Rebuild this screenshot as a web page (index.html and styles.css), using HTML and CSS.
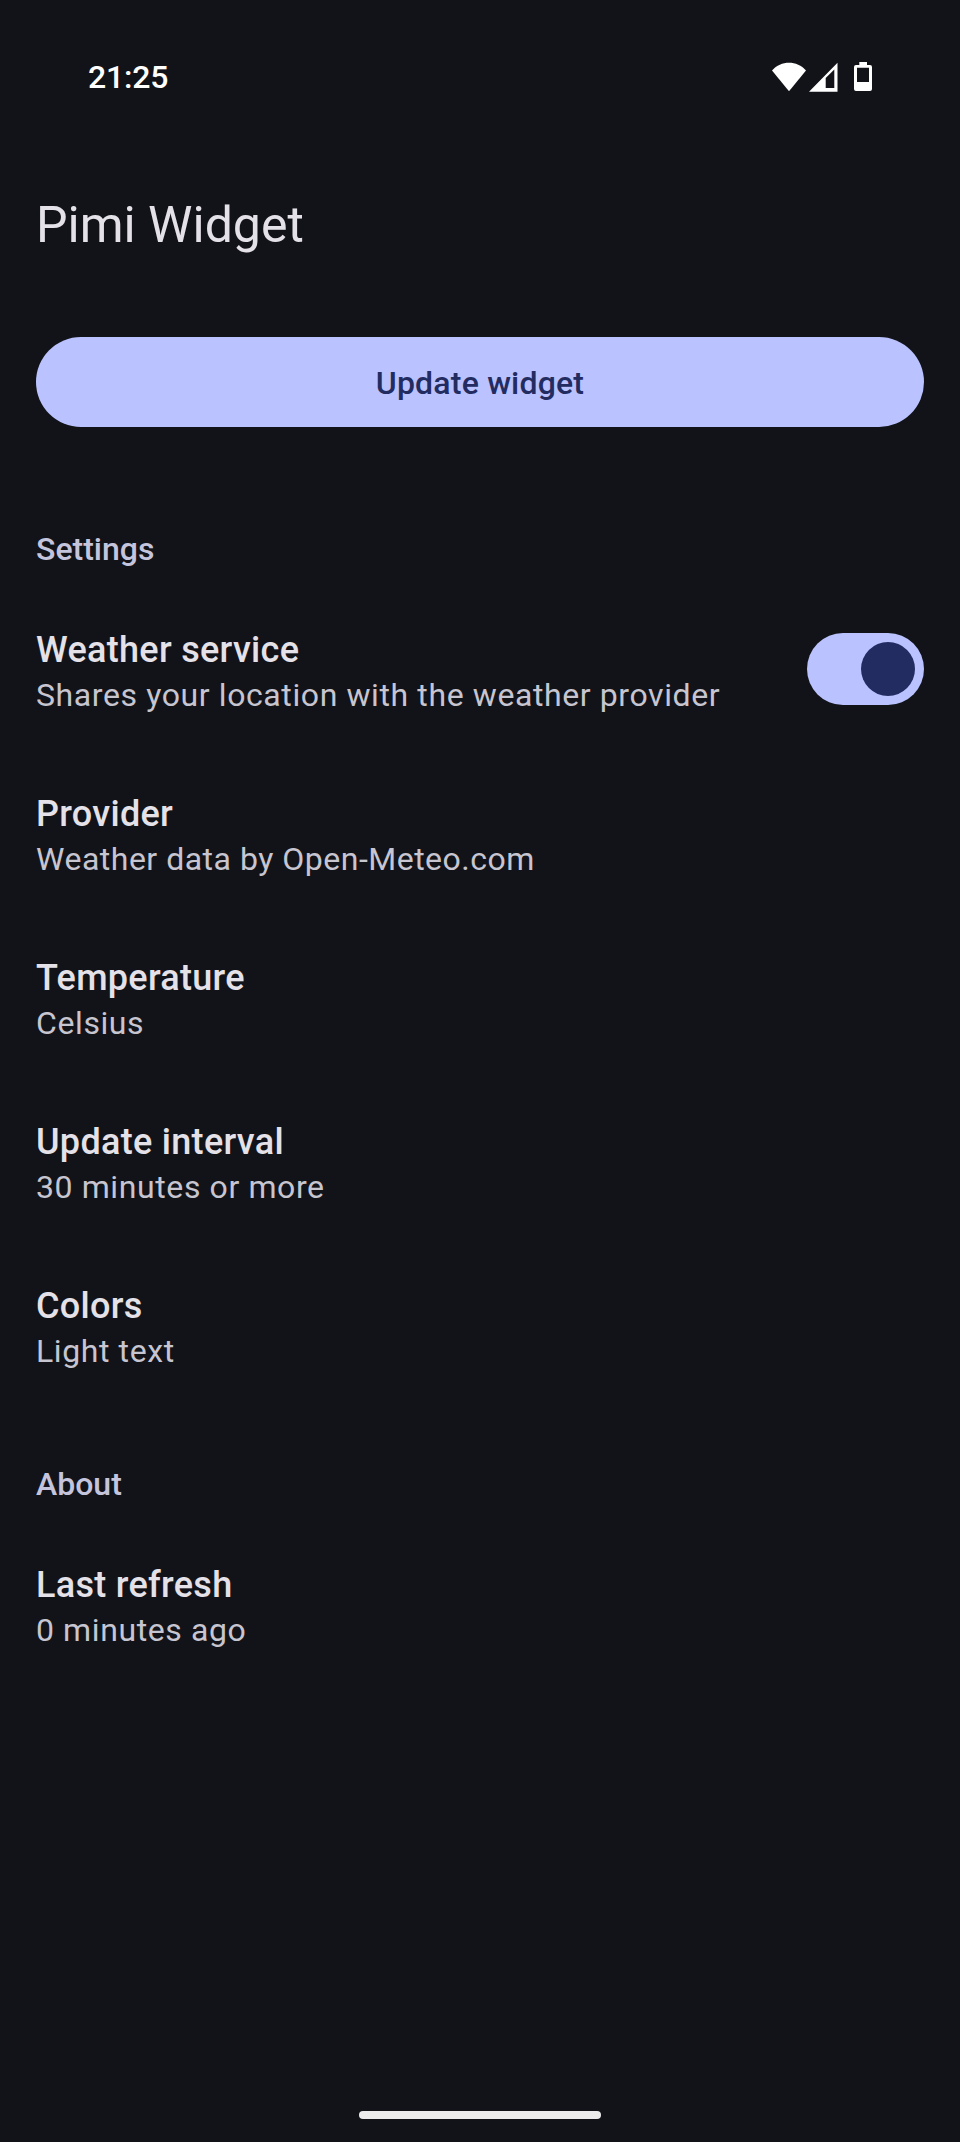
FILE: index.html
```html
<!DOCTYPE html>
<html lang="en">
<head>
<meta charset="utf-8">
<title>Pimi Widget</title>
<link rel="stylesheet" href="styles.css">
</head>
<body>
<div class="screen">
  <header class="status">
    <span class="clock">21:25</span>
    <svg class="status-icons" width="100" height="30" viewBox="0 0 100 30" fill="#fff">
      <path d="M0 8.500C9 -1.800 25 -1.800 34 8.500L17 29.300Z"/>
      <path fill-rule="evenodd" d="M37 29.700L65.500 .7V29.700ZM53.700 26H62.300V7.500L53.700 16Z"/>
      <path fill-rule="evenodd" d="M87.300 0H95V3H98Q100 3 100 5V27Q100 29 98 29H84Q82 29 82 27V5Q82 3 84 3H87.300ZM85 5.800V20H97V5.800Z"/>
    </svg>
  </header>
  <h1 class="title">Pimi Widget</h1>
  <button class="update">Update widget</button>
  <main>
    <h2 class="section">Settings</h2>
    <div class="item item-switch">
      <div><div class="name">Weather service</div><div class="detail">Shares your location with the weather provider</div></div>
      <div class="switch"><div class="thumb"></div></div>
    </div>
    <div class="item"><div class="name">Provider</div><div class="detail detail-provider">Weather data by Open-Meteo.com</div></div>
    <div class="item"><div class="name">Temperature</div><div class="detail">Celsius</div></div>
    <div class="item"><div class="name">Update interval</div><div class="detail">30 minutes or more</div></div>
    <div class="item"><div class="name">Colors</div><div class="detail">Light text</div></div>
    <h2 class="section section-about">About</h2>
    <div class="item"><div class="name">Last refresh</div><div class="detail">0 minutes ago</div></div>
  </main>
  <div class="handle"></div>
</div>
</body>
</html>
```
FILE: styles.css
```css
* { box-sizing: border-box; }
body { margin: 0; background: #121318; }
.screen {
  display: flex;
  flex-direction: column;
  width: 960px;
  height: 2142px;
  padding: 0 36px;
  font-family: Roboto, sans-serif;
  color: #e4e1e9;
}
.status {
  display: flex;
  justify-content: space-between;
  align-items: center;
  height: 154px;
  padding: 0 52px;
}
.clock { font-size: 32px; font-weight: 500; letter-spacing: -0.2px; color: #fff; }
.title {
  height: 142px;
  margin: 0;
  padding-top: 35px;
  font-size: 50px;
  line-height: 72px;
  font-weight: 400;
}
.update {
  height: 90px;
  margin: 41px 0 0;
  padding: 3px 0 0;
  border: 0;
  border-radius: 45px;
  background: #bac3ff;
  color: #232c61;
  font: 500 32px/45px Roboto, sans-serif;
  letter-spacing: 0.2px;
}
.section {
  margin: 100px 0 0;
  font-size: 32px;
  line-height: 45px;
  font-weight: 500;
  color: #c4c5dd;
}
.section-about { margin-top: 70px; }
.item { height: 164px; padding-top: 53px; }
.item-switch { display: flex; justify-content: space-between; }
.name { font-size: 36px; line-height: 50px; font-weight: 500; letter-spacing: 0.3px; }
.detail { font-size: 32px; line-height: 41px; letter-spacing: 0.6px; color: #c6c5d0; }
.detail-provider { letter-spacing: 0.5px; }
.switch {
  display: flex;
  align-items: center;
  justify-content: flex-end;
  width: 117px;
  height: 72px;
  margin-top: 8px;
  padding: 9px;
  border-radius: 36px;
  background: #bac3ff;
}
.thumb { width: 54px; height: 54px; border-radius: 50%; background: #232c61; }
.handle {
  width: 242px;
  height: 8px;
  margin: auto auto 23px;
  border-radius: 4px;
  background: #ececec;
}
```
